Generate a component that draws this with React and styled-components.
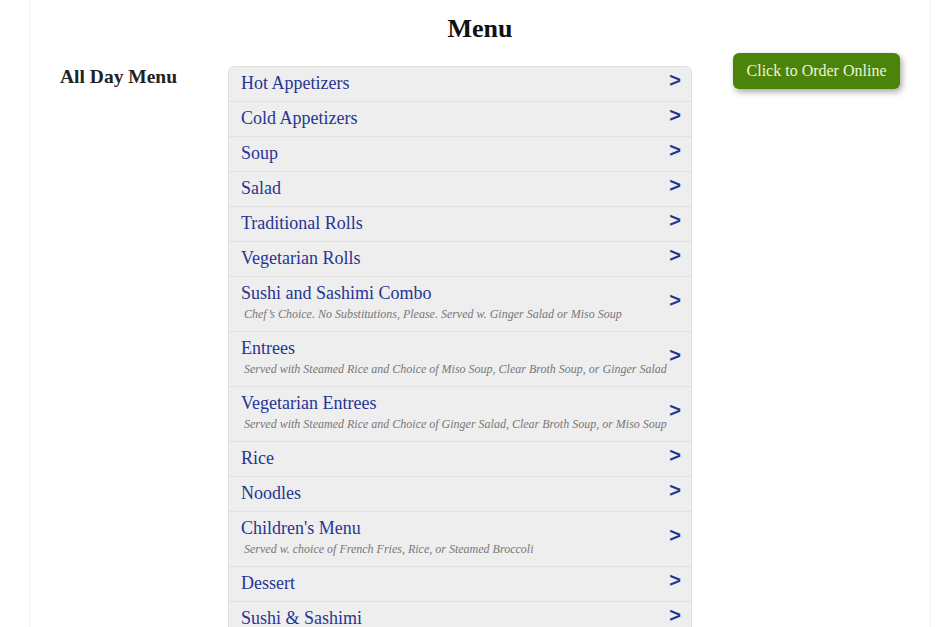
import React from 'react';
import styled, { createGlobalStyle } from 'styled-components';

const GlobalStyle = createGlobalStyle`
  body {
    margin: 0;
    background: #ffffff;
    font-family: "Liberation Serif", "Times New Roman", serif;
  }
`;

const Page = styled.div`
  width: 900px;
  margin-left: 29px;
  min-height: 627px;
  border-left: 1px solid #f0f0f0;
  border-right: 1px solid #f0f0f0;
  background: #fff;
`;

const Title = styled.h1`
  margin: 0;
  padding-top: 14px;
  text-align: center;
  font-size: 26px;
  line-height: 30px;
  font-weight: bold;
  color: #111;
`;

const Body = styled.div`
  display: flex;
  align-items: flex-start;
  margin-top: 22px;
`;

const Side = styled.div`
  width: 168px;
  padding-left: 30px;
`;

const SideTitle = styled.h2`
  margin: 0;
  font-size: 19.5px;
  line-height: 22px;
  font-weight: bold;
  color: #222;
`;

const List = styled.div`
  width: 462px;
  border: 1px solid #e0e0e0;
  border-bottom: none;
  border-radius: 6px 6px 0 0;
  overflow: hidden;
`;

const Row = styled.div`
  display: flex;
  align-items: center;
  background: #eeeeee;
  border-top: ${p => (p.first ? 'none' : '1px solid #e0e0e0')};
  padding: 6px 10px 8px 12px;
  cursor: pointer;
`;

const RowText = styled.div`
  flex: 1;
`;

const RowTitle = styled.div`
  font-size: 18px;
  line-height: 20px;
  color: #263594;
`;

const RowNote = styled.div`
  font-size: 12px;
  line-height: 20px;
  padding-top: 1px;
  margin-bottom: -1px;
  font-style: italic;
  color: #777;
  padding-left: 3px;
  white-space: nowrap;
`;

const Chevron = styled.span`
  font-family: "Liberation Sans", Arial, sans-serif;
  font-weight: bold;
  font-size: 20px;
  line-height: 20px;
  color: #263594;
  margin-top: -6px;
`;

const Right = styled.div`
  margin-left: 41px;
  margin-top: -13px;
`;

const OrderButton = styled.button`
  width: 167px;
  height: 36px;
  border: none;
  border-radius: 6px;
  background: #4b8409;
  color: #e9f6dc;
  font-family: "Liberation Serif", "Times New Roman", serif;
  font-size: 16px;
  box-shadow: 2px 3px 6px rgba(0, 0, 0, 0.35);
  cursor: pointer;
`;

const items = [
  { t: 'Hot Appetizers' },
  { t: 'Cold Appetizers' },
  { t: 'Soup' },
  { t: 'Salad' },
  { t: 'Traditional Rolls' },
  { t: 'Vegetarian Rolls' },
  { t: 'Sushi and Sashimi Combo', n: 'Chef\u2019s Choice. No Substitutions, Please. Served w. Ginger Salad or Miso Soup' },
  { t: 'Entrees', n: 'Served with Steamed Rice and Choice of Miso Soup, Clear Broth Soup, or Ginger Salad' },
  { t: 'Vegetarian Entrees', n: 'Served with Steamed Rice and Choice of Ginger Salad, Clear Broth Soup, or Miso Soup' },
  { t: 'Rice' },
  { t: 'Noodles' },
  { t: "Children's Menu", n: 'Served w. choice of French Fries, Rice, or Steamed Broccoli' },
  { t: 'Dessert' },
  { t: 'Sushi & Sashimi' },
];

export default function App() {
  return (
    <>
      <GlobalStyle />
      <Page>
        <Title>Menu</Title>
        <Body>
          <Side>
            <SideTitle>All Day Menu</SideTitle>
          </Side>
          <List>
            {items.map((it, i) => (
              <Row key={it.t} first={i === 0}>
                <RowText>
                  <RowTitle>{it.t}</RowTitle>
                  {it.n && <RowNote>{it.n}</RowNote>}
                </RowText>
                <Chevron>&gt;</Chevron>
              </Row>
            ))}
          </List>
          <Right>
            <OrderButton>Click to Order Online</OrderButton>
          </Right>
        </Body>
      </Page>
    </>
  );
}
